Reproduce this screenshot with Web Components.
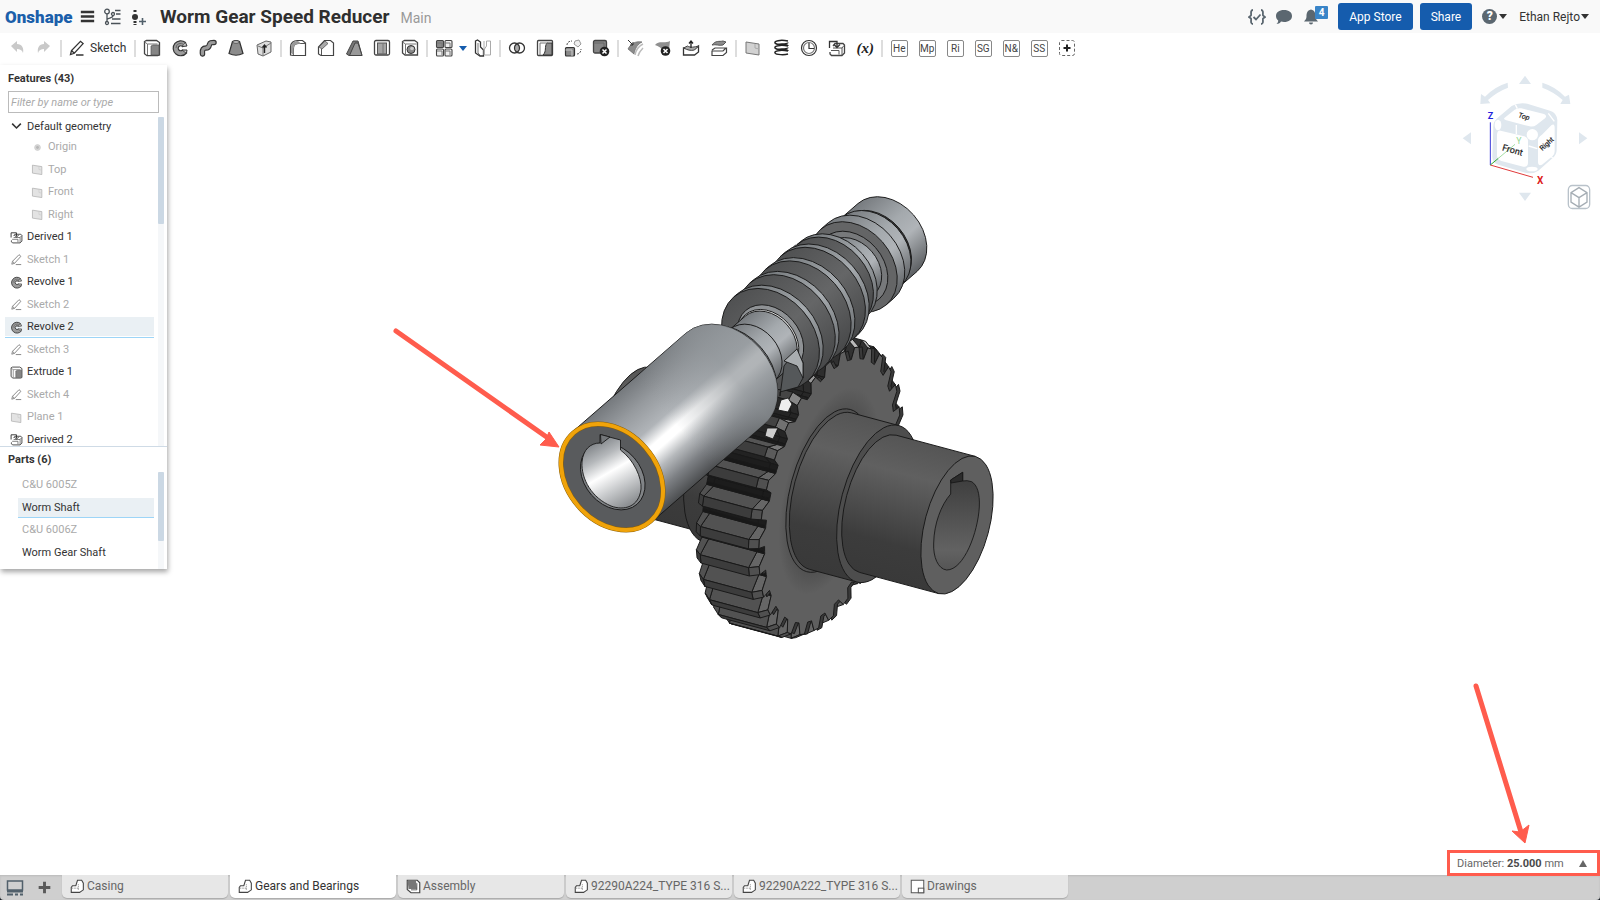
<!DOCTYPE html>
<html lang="en">
<head>
<meta charset="utf-8">
<title>Worm Gear Speed Reducer | Main</title>
<style>
html, body { margin: 0; height: 100%; }
body { font: 12px/16px Roboto, "Liberation Sans", sans-serif; color: #333; background: #1c2228; }
</style>
</head>
<body>
<cad-app></cad-app>
<script>
const define = (name, html, setup) => {
  const t = document.createElement('template');
  t.innerHTML = html;
  customElements.define(name, class extends HTMLElement {
    constructor() {
      super();
      this.attachShadow({ mode: 'open' }).append(t.content.cloneNode(true));
    }
    connectedCallback() { if (setup) setup(this, this.shadowRoot); }
  });
};

/* Icons share an 18 by 18 grid. */
const plane = '<path d="M2 3l13 2v11L2 14z" fill="#d2d2d2" stroke="#777"/><path d="M11 5v4l4 1" fill="none" stroke="#aaa"/>';
const icons = {
  menu: '<path d="M1 3.500h16M1 9h16M1 14.500h16" stroke="#333" stroke-width="3"/>',
  versions: '<g fill="none" stroke="#4a5258" stroke-width="1.300"><circle cx="4" cy="3.500" r="2.300"/><circle cx="10" cy="6" r="1.500"/><circle cx="4" cy="15" r="1.500"/><path d="M4 6v7.500M10 7.500c0 3-5 2-6 4M12 2.500h5.500M13 6h4.500M9 11h8.500M8 15.500h9.500"/></g>',
  insert: '<path d="M6 2v3M6 13v4" stroke="#333" stroke-width="3" stroke-dasharray="2 1"/><circle cx="6" cy="9" r="3" fill="#333"/><path d="M10 13.500h7M13.500 10v7" stroke="#51606b" stroke-width="1.600"/>',
  undo: '<path d="M3 7l6-5v3c5 0 7 4 6 9-1-3-3-4-6-4v3z" fill="#c9c9c9"/>',
  redo: '<path d="M15 7L9 2v3c-5 0-7 4-6 9 1-3 3-4 6-4v3z" fill="#c9c9c9"/>',
  pencil: '<path d="M2.500 15.500l1-4L12.500 2.300l2.600 2.300-8.800 9.700zM3.500 11.500l2.800 2.800M8 16h7.500" fill="none" stroke="#333" stroke-width="1.300"/>',
  extrude: '<path d="M1.500 2.500l2-1h10l3 2v12.500l-2 .7H4l-2.500-2z" fill="#fff" stroke="#444" stroke-width="1.300"/><path d="M1.500 3l3 2v11M4.500 5h10" fill="none" stroke="#777"/><path d="M8 7l2-1h6v10H8z" fill="#858585" stroke="#555" stroke-width=".7"/>',
  revolve: '<path d="M14.500 3.500A7.500 7.500 0 1 0 15.500 14l-4-3A2.500 2.500 0 1 1 11.500 7.500z" fill="#9c9c9c" stroke="#333" stroke-width="1.200"/><path d="M5 9a4.500 4.500 0 0 1 8-3" fill="none" stroke="#666"/><path d="M14.500 3.500l1.500 3.500-4.500.5M11.500 11l4.500 0-.5 3" fill="#ccc" stroke="#333"/>',
  sweep: '<path d="M3.500 15c-.5-5 1-6 3.500-6s3-1.500 3.500-3.500S12 3.500 15 3.500" fill="none" stroke="#333" stroke-width="5.500" stroke-linecap="round"/><path d="M3.500 15c-.5-5 1-6 3.500-6s3-1.500 3.500-3.500S12 3.500 15 3.500" fill="none" stroke="#9a9a9a" stroke-width="3.200" stroke-linecap="round"/>',
  loft: '<path d="M5.500 2.500L2 14.500q7 3.500 14 0L12.500 2.500q-3.500-2-7 0z" fill="#8c8c8c" stroke="#333" stroke-width="1.200"/><ellipse cx="9" cy="3" rx="3.200" ry="1.300" fill="#ccc" stroke="#444" stroke-width=".8"/>',
  thicken: '<path d="M2 6l9-4 5 1v10l-8 4-5-2z" fill="#ddd" stroke="#666"/><path d="M3 7l5 2 8-5M8 9v8" fill="none" stroke="#777"/><path d="M9.500 14V6M7.500 8.500l2-2.500 2 2.500" fill="none" stroke="#222" stroke-width="1.400"/>',
  fillet: '<path d="M1.500 16V8c0-4 3-6.500 7-6.500h5l3 2.500v12.500H4z" fill="#fff" stroke="#444" stroke-width="1.200"/><path d="M4.500 16V10c0-4 2.500-5.500 6-5.500h5.500" fill="none" stroke="#555"/><path d="M2 14V8c0-4 3-6 7-6l3 2.500C7 4.500 4.500 6 4.500 10v6z" fill="#999"/>',
  chamfer: '<path d="M1.500 15V8l6-6.500h6l3 2.500v12.500H4z" fill="#fff" stroke="#444" stroke-width="1.200"/><path d="M2 8l6-6 3 2.500-6 5.500z" fill="#aaa" stroke="#555" stroke-width=".8"/><path d="M4.500 16v-6" stroke="#555"/>',
  draft: '<path d="M1.500 15L8 2h5l4 14.500H4z" fill="#777" stroke="#444"/><path d="M4.500 16.500L10 4h3l4 12.500z" fill="#999" stroke="#444"/>',
  shell: '<rect x="1.500" y="1.500" width="15" height="14.500" rx="1.500" fill="#fff" stroke="#444" stroke-width="1.300"/><rect x="4.500" y="4" width="9" height="11" fill="#a5a5a5" stroke="#555"/><path d="M10 4v11" stroke="#777"/>',
  hole: '<path d="M1.500 2.500l2-1h10l3 2v12.500H4l-2.500-2z" fill="#fff" stroke="#444" stroke-width="1.300"/><path d="M1.500 3l3 2v11M4.500 5h11" fill="none" stroke="#777"/><circle cx="10" cy="10.500" r="4" fill="#8a8a8a" stroke="#333"/><circle cx="11" cy="9.500" r="1.800" fill="#ccc"/>',
  pattern: '<g fill="#eee" stroke="#444" stroke-width="1.100"><rect x="1.500" y="1.500" width="7" height="7" rx="1" fill="#8a8a8a"/><rect x="10" y="1.500" width="7" height="7" rx="1"/><rect x="1.500" y="10" width="7" height="7" rx="1"/><rect x="10" y="10" width="7" height="7" rx="1"/></g><path d="M2 4h5v4M10 4h5v4M2 12h5v4M10 12h5v4" fill="none" stroke="#777"/>',
  mirror: '<path d="M1.500 2l2-1 3 2v5l3 3v6H6l-4.500-3z" fill="#fff" stroke="#333" stroke-width="1.300"/><path d="M4 4v10l2 2" fill="none" stroke="#777"/><path d="M10 2v14M16.500 2h-4v5l-2 3v6h6z" fill="none" stroke="#aaa"/>',
  boolean: '<path d="M9 5a5 5 0 0 1 0 8 5 5 0 0 1 0-8" fill="#aaa"/><g fill="none" stroke="#333" stroke-width="1.300"><circle cx="6.500" cy="9" r="5"/><circle cx="11.500" cy="9" r="5"/></g>',
  split: '<rect x="1.500" y="1.500" width="15" height="15" rx="1" fill="#fff" stroke="#444" stroke-width="1.300"/><path d="M11 4h5v12H7c4-4 1-8 4-12z" fill="#8c8c8c" stroke="#333"/><path d="M4 4v12M4 4h8" stroke="#777" fill="none"/>',
  transform: '<rect x="1.500" y="8.500" width="9" height="8.500" rx="1" fill="#8a8a8a" stroke="#333" stroke-width="1.200"/><path d="M1.500 11h6.500v6" stroke="#ccc" fill="none"/><path d="M11 2l4-1 2 4-3 3-4-3z" fill="#eee" stroke="#999"/><path d="M3 6c0-3 3-4 5-4M13 15c3 0 4-3 4-5" fill="none" stroke="#555" stroke-dasharray="2 1"/>',
  remove: '<rect x="1.500" y="1.500" width="13" height="12.500" rx="1.500" fill="#858585" stroke="#444" stroke-width="1.300"/><path d="M2 4h10v9" fill="none" stroke="#666"/><circle cx="12.500" cy="12.500" r="4.800" fill="#222"/><path d="M10.500 10.500l4 4M14.500 10.500l-4 4" stroke="#fff" stroke-width="1.500"/>',
  modify: '<path d="M2 10c3-6 8-8 14-7-4 2-7 6-8 12z" fill="#8b8b8b" stroke="#666" stroke-width=".7"/><path d="M9 16c1-6 4-9 8-11M12 17c1-4 3-6 5-8" fill="none" stroke="#bbb" stroke-width="1.500"/><path d="M2 1l5 5M7 3v3H4" fill="none" stroke="#333"/>',
  deleteface: '<path d="M1 6c4-5 9-1 15-4l-1 9-6 3c0-5-5-7-8-8z" fill="#909090"/><circle cx="11.500" cy="12" r="4.800" fill="#222"/><path d="M9.500 10l4 4M13.500 10l-4 4" stroke="#fff" stroke-width="1.500"/>',
  moveface: '<path d="M1.500 9v7h11l4-3V7l-4 3z" fill="#fff" stroke="#333" stroke-width="1.300"/><path d="M1.500 9l4-2c3 2 7 1 11 0l-4 4c-4 1-7 0-11-2z" fill="#aaa" stroke="#444"/><path d="M9 9V2M7 4.500L9 2l2 2.500" fill="none" stroke="#222" stroke-width="1.300"/>',
  replaceface: '<path d="M2 6c4-5 7-3 11-4l3 1-3 3c-4 1-7-1-11 0z" fill="#8c8c8c" stroke="#555"/><path d="M2 11l3-2h11l-3 3H2v4.500h11l3.500-3V9" fill="#fff" stroke="#444" stroke-width="1.200"/>',
  plane,
  helix: '<g fill="none" stroke="#222" stroke-width="1.500"><path d="M16 2C8 .5 2 2 3 4s13 1 13-.5M3 4c2 3 13 0 13 3M16 7C8 5.500 2 7 3 9s13 1 13-.5M3 9c2 3 13 0 13 3M16 12c-8-1.500-14 0-13 2s10 2 13 1"/></g>',
  curve: '<g fill="none" stroke="#333" stroke-width="1.200"><circle cx="9" cy="9" r="7.500"/><circle cx="9" cy="9" r="5.500" stroke="#777"/><path d="M9 4v5.500h5"/></g>',
  derived: '<path d="M5 7l2-2.500h8l1.500 1.500v8l-2.500 2.500H3.500L2 15v-2" fill="#fff" stroke="#444" stroke-width="1.300"/><path d="M5 9h9l2-2.500M14 9v7M3 11.500h8v4" fill="none" stroke="#555"/><path d="M1.500 9V2.500H9v5M6 5.500L9 8.500l3-3" fill="none" stroke="#333" stroke-width="1.300"/>',
  add: '<rect x="1.500" y="1.500" width="15" height="15" rx="2" fill="none" stroke="#666" stroke-dasharray="3 2"/><path d="M5.500 9h7M9 5.500v7" stroke="#222" stroke-width="2"/>',
  braces: '<g fill="none" stroke="#5b6770" stroke-width="1.800"><path d="M5 2C2 2 3.500 6 3 7.500L1 9l2 1.500C3.500 12 2 16 5 16M13 2c3 0 1.500 4 2 5.500L17 9l-2 1.500c-.5 1.500 1 5.500-2 5.500M5.500 9l2.500 2.500 4.500-5"/></g>',
  chat: '<path d="M9 2c5 0 8 2.500 8 6s-3 6-8 6c-1 0-2 0-3-.4C5 15.500 3 16 1.500 16c1-1 1.800-2 1.700-3.500C1.700 11.300 1 9.800 1 8c0-3.500 3-6 8-6z" fill="#5b6770"/>',
  bell: '<path d="M9 1.500c-4 1-4.500 4-4.500 7 0 2-1 3.500-2.500 5h14c-1.500-1.500-2.500-3-2.500-5 0-3-.5-6-4.500-7zM7 14.500a2 2 0 0 0 4 0z" fill="#5b6770"/>',
  part: '<path d="M1.500 16h10l4.500-3V5l-2-3.500H9L7 8H3l-1.500 2z" fill="#fff" stroke="#444" stroke-width="1.300"/><path d="M2 11h8V6M10 11v2" fill="none" stroke="#888" stroke-dasharray="2 1"/>',
  assembly: '<path d="M1.500 1.500h12l3 3v12H6l-4.500-4z" fill="#fff" stroke="#444" stroke-width="1.400"/><path d="M2 2h10l1 10H3z" fill="#777"/><path d="M6 13h7V5" stroke="#444" fill="none"/>',
  drawing: '<rect x="1.500" y="1.500" width="15" height="15" fill="#fff" stroke="#555" stroke-width="1.200"/><rect x="10" y="11" width="6.500" height="5.500" fill="#fff" stroke="#555" stroke-width="1.200"/>',
  tabs: '<path d="M1.500 2h15v9h-15z" fill="none" stroke="#51606b" stroke-width="1.500"/><path d="M1 11h16v2.500H1zM1 14.500h6v2H1zM9 14.500h3v2H9zM14 14.500h3v2h-3z" fill="#51606b"/>',
  plus: '<path d="M2 9h14M9 2v14" stroke="#5a5a5a" stroke-width="3.500"/>',
  origin: '<circle cx="9" cy="9" r="4" fill="#bbb" stroke="#aaa"/><circle cx="9" cy="9" r="2" fill="#888"/>',
  chevron: '<path d="M3 5l6 6 6-6" fill="none" stroke="#333" stroke-width="2.200"/>',
  isocube: '<rect x="1" y="1" width="16" height="16" rx="3" fill="#fff" stroke="#b9c2ca"/><path d="M9 2.500l6 3.500v6.500L9 16l-6-3.500V6zM3 6l6 3.500L15 6M9 9.500V16" fill="none" stroke="#a5adb4"/>'
};

define('cad-icon', '<style>:host{display:block;width:18px;height:18px;flex:none}:host([small]){width:13px;height:13px}:host([mid]){width:15px;height:15px}:host([big]){width:24px;height:26px}svg{display:block;width:100%;height:100%}</style><svg viewBox="0 0 18 18" preserveAspectRatio="none" aria-hidden="true"></svg>',
  (el, root) => { root.querySelector('svg').innerHTML = icons[el.getAttribute('name')]; });

define('cad-caret', '<style>:host{display:block;flex:none;border:4px solid transparent;border-top:5px solid currentColor;border-bottom:0}:host([up]){border-top:0;border-bottom:7px solid currentColor}</style>');

/* Header */
define('cad-header', `<style>
:host{display:flex;align-items:center;height:33px;background:#f9f9f9;padding:0 11px 0 5px;box-sizing:border-box}
button{font:inherit;border:0;background:none;padding:0;color:inherit;display:flex;align-items:center}
a{font-weight:900;font-size:17px;line-height:24px;color:#1b5faa;text-decoration:none;width:67px}
.icons{display:flex;gap:8px;padding:0 13px 0 8px}
h1{font-size:19px;line-height:24px;font-weight:700;margin:0;color:#2f2f2f}
.branch{font-size:14px;color:#999;padding:3px 0 0 11px}
.end{margin-left:auto;display:flex;align-items:center}
.acts{display:flex;gap:9px;padding-right:18px}
.bell{position:relative}
.badge{position:absolute;left:13px;top:-2px;width:13px;height:13px;background:#3a85c8;color:#fff;font-size:10px;line-height:13px;font-weight:700;text-align:center;border-radius:1px}
.fill{background:#155cad;color:#fff;border-radius:3px;height:27px;padding:0 11px;margin-right:7px}
.help{width:15px;height:15px;border-radius:50%;background:#5b6770;color:#fff;font-weight:900;font-size:12px;line-height:15px;text-align:center;margin-right:2px}
.q{padding:0 12px 0 3px}.user{gap:1px}
</style>
<a href="#">Onshape</a>
<div class="icons"><button aria-label="Menu"><cad-icon name="menu" mid></cad-icon></button><button aria-label="Versions"><cad-icon name="versions"></cad-icon></button><button aria-label="Insert"><cad-icon name="insert"></cad-icon></button></div>
<h1>Worm Gear Speed Reducer</h1><span class="branch">Main</span>
<div class="end">
<div class="acts"><button aria-label="Custom features"><cad-icon name="braces"></cad-icon></button><button aria-label="Comments"><cad-icon name="chat"></cad-icon></button><button class="bell" aria-label="Notifications"><cad-icon name="bell"></cad-icon><span class="badge">4</span></button></div>
<button class="fill">App Store</button><button class="fill">Share</button>
<button class="q" aria-label="Help"><span class="help">?</span><cad-caret></cad-caret></button>
<button class="user">Ethan Rejto<cad-caret></cad-caret></button>
</div>`);

/* Toolbar */
define('tool-group', '<style>:host{display:flex;align-items:center;gap:8px}:host::before{content:"";width:2px;height:17px;background:#ddd;margin:0 -2px 0 6px}</style><slot></slot>');
define('tool-button', '<style>:host{display:block}button{display:flex;align-items:center;justify-content:center;width:20px;height:20px;border:0;background:none;padding:0;font:inherit}span{display:none}:host([code]) span{display:block;box-sizing:border-box;width:17px;height:17px;border:1px solid #888;border-radius:2px;font-size:10px;line-height:15px;color:#444}:host([fx]) span{display:block;font:italic 700 15px/16px "Liberation Serif",serif;color:#222}</style><button><cad-icon></cad-icon><span></span></button>',
  (el, root) => {
    const n = el.getAttribute('name'), code = el.getAttribute('code') || el.getAttribute('fx');
    if (code) { root.querySelector('span').textContent = code; root.querySelector('cad-icon').remove(); }
    else { const i = document.createElement('cad-icon'); i.setAttribute('name', n); root.querySelector('cad-icon').replaceWith(i); }
    root.querySelector('button').setAttribute('aria-label', code || n);
  });
const tools = s => s.split(' ').map(n => `<tool-button name="${n}"></tool-button>`).join('');
define('cad-toolbar', `<style>
:host{display:flex;align-items:center;height:32px;background:#fff;padding:0 0 2px 7px;box-sizing:border-box}
.hist{display:flex;gap:7px}
.sketch{display:flex;align-items:center;gap:4px;font:inherit;color:#333;border:0;background:none;padding:0;margin-right:2px}
.pat{display:flex;align-items:center;gap:5px;color:#155cad;margin-right:-2px}
</style>
<div class="hist">${tools('undo redo')}</div>
<tool-group><button class="sketch"><cad-icon name="pencil"></cad-icon>Sketch</button></tool-group>
<tool-group>${tools('extrude revolve sweep loft thicken')}</tool-group>
<tool-group>${tools('fillet chamfer draft shell hole')}</tool-group>
<tool-group><div class="pat">${tools('pattern')}<cad-caret></cad-caret></div>${tools('mirror')}</tool-group>
<tool-group>${tools('boolean split transform remove')}</tool-group>
<tool-group>${tools('modify deleteface moveface replaceface')}</tool-group>
<tool-group>${tools('plane helix curve derived')}<tool-button fx="(x)"></tool-button></tool-group>
<tool-group>${['He', 'Mp', 'Ri', 'SG', 'N&amp;', 'SS'].map(c => `<tool-button code="${c}"></tool-button>`).join('')}${tools('add')}</tool-group>`);

/* Feature panel */
define('tree-row', `<style>
:host{display:flex;align-items:center;flex:1 1 0;min-height:0;line-height:12px;padding:0 0 0 5px;margin:0 4px 0 5px;color:#333}
:host([dim]){color:#aaa}:host([dim]) cad-icon{opacity:.6}
:host([sub]){padding-left:26px}
:host([root]){flex:0 0 19px}
:host([part]){margin-left:18px;padding-left:4px}
:host([on]){background:linear-gradient(#9dd5f7,#9dd5f7) left bottom 1px/100% 1px no-repeat,linear-gradient(#eaf0f4,#eaf0f4) left top 1px/100% 19px no-repeat}
cad-icon{margin-right:4px}
</style><cad-icon small></cad-icon><slot></slot>`, (el, root) => {
  const n = el.getAttribute('name'), old = root.querySelector('cad-icon');
  if (!n) { old.remove(); return; }
  const i = document.createElement('cad-icon'); i.setAttribute('name', n); i.setAttribute('small', ''); old.replaceWith(i);
});
define('feature-panel', `<style>
:host{display:block;width:167px;background:#fff;box-shadow:1px 3px 5px rgba(0,0,0,.35);font-size:11px}
h2{font-size:11px;line-height:16px;font-weight:700;margin:0;padding:6px 8px 4px}
input{display:block;box-sizing:border-box;width:151px;height:22px;margin:0 8px;border:1px solid #bbb;padding:0 2px;font:italic 11px Roboto,sans-serif;background:#fff}
input::placeholder{color:#aaa;opacity:1}
.scroll{display:flex;overflow:hidden}
.rows{flex:1;display:flex;flex-direction:column}
.bar{width:6px;margin-right:3px;background:#f5f7f9}
.bar i{display:block;background:#cbd8e4;border-radius:1px}
.f{height:333px;padding-top:4px;box-sizing:border-box}
.f .rows{height:334px}.f i{height:107px}
.p{height:97px}.p .rows{height:90px;padding-top:2px}.p i{height:69px}
.parts{border-top:1px solid #cfdbe6}
.parts h2{padding:5px 8px 4px}
</style>
<h2>Features (43)</h2>
<input type="text" aria-label="Filter features" placeholder="Filter by name or type">
<div class="scroll f"><div class="rows">
<tree-row root name="chevron">Default geometry</tree-row>
<tree-row dim sub name="origin">Origin</tree-row><tree-row dim sub name="plane">Top</tree-row><tree-row dim sub name="plane">Front</tree-row><tree-row dim sub name="plane">Right</tree-row>
<tree-row name="derived">Derived 1</tree-row><tree-row dim name="pencil">Sketch 1</tree-row><tree-row name="revolve">Revolve 1</tree-row><tree-row dim name="pencil">Sketch 2</tree-row><tree-row on name="revolve">Revolve 2</tree-row><tree-row dim name="pencil">Sketch 3</tree-row><tree-row name="extrude">Extrude 1</tree-row><tree-row dim name="pencil">Sketch 4</tree-row><tree-row dim name="plane">Plane 1</tree-row><tree-row name="derived">Derived 2</tree-row>
</div><div class="bar"><i></i></div></div>
<div class="parts"><h2>Parts (6)</h2>
<div class="scroll p"><div class="rows"><tree-row part dim>C&amp;U 6005Z</tree-row><tree-row part on>Worm Shaft</tree-row><tree-row part dim>C&amp;U 6006Z</tree-row><tree-row part>Worm Gear Shaft</tree-row></div><div class="bar"><i></i></div></div></div>`);

/* 3D model: two shafts, each drawn in a frame whose x axis is its own axis. */
function drawModel() {
  const ink = 'stroke="#191919" stroke-width=".9" stroke-linejoin="round"';
  const n = v => v.toFixed(1);
  const ell = (x, r, k, fill, y = 0) => `<ellipse cx="${x}" cy="${y}" rx="${n(r * k)}" ry="${r}" fill="${fill}" ${ink}/>`;

  /* Gear shaft: the visible end is at x = 0 and the body runs to negative x. */
  const K = .453, KG = .415;
  const hub = (a, b, r, fill) => `<path d="M${a} ${-r}L${b} ${-r}A${n(r * K)} ${r} 0 0 0 ${b} ${r}L${a} ${r}Z" fill="${fill}" ${ink}/>`;
  const teeth = 30, front = -132;
  const xs = [front, front - 8, front - 58, front - 65], tip = [148, 154, 154, 148], rootR = 136;
  const prof = [[0, 0], [.2, 0], [.3, 1], [.62, 1], [.9, 0]];
  const ring = j => {
    const out = [];
    for (let t = 0; t < teeth; t++) for (const [f, up] of prof) {
      const a = (t + f + .2) * 2 * Math.PI / teeth, r = up ? tip[j] : rootR;
      out.push([xs[j] + r * KG * Math.cos(a), r * Math.sin(a), a]);
    }
    return out;
  };
  const rings = xs.map((_, j) => ring(j));
  const quads = [];
  const count = rings[0].length;
  const shade = [28, 32, 60, 82, 24];
  for (let i = 0; i < count; i++) for (let j = 0; j < 3; j++) {
    const m = (i + 1) % count, A = rings[j][i], B = rings[j][m], C = rings[j + 1][m], D = rings[j + 1][i];
    const area = (B[0] - A[0]) * (D[1] - A[1]) - (B[1] - A[1]) * (D[0] - A[0]);
    if (area > 0) continue;
    const kind = i % 5, mid = A[2];
    const upper = Math.max(0, -Math.sin(mid));
    const g = Math.round(shade[kind] + (j === 0 && kind > 1 && kind < 4 ? 20 + 90 * upper : 0) + upper * 18);
    quads.push([Math.cos(mid) - (kind === 2 ? .1 : 0), `<path d="M${[A, B, C, D].map(p => n(p[0]) + ' ' + n(p[1])).join('L')}Z" fill="rgb(${g},${g},${g})" ${ink}/>`]);
  }
  quads.sort((a, b) => b[0] - a[0]);
  const outline = r => 'M' + r.map(p => n(p[0]) + ' ' + n(p[1])).join('L') + 'Z';

  const gear = `<g transform="translate(957 525) rotate(15)">
    ${hub(-200, -336, 73, 'url(#dark)')}${hub(-180, -240, 82, 'url(#dark)')}
    <path d="${outline(rings[2])}" fill="#262626" ${ink}/>${quads.map(q => q[1]).join('')}
    <path d="${outline(rings[0])}" fill="#3a3a3a" ${ink} transform="translate(3 -1)"/>
    <path d="${outline(rings[0])}" fill="url(#gearface)" ${ink}/>
    ${ell(-133, 84, K, '#505050')}${hub(-82, -131, 81, 'url(#dark)')}
    ${ell(-82, 81, K, '#4d4d4d')}${hub(0, -82, 71, 'url(#dark)')}${ell(0, 71, K, '#5f5f5f')}
  </g>
  <path d="M950.700 480L962.700 472.300L962.700 481Q967 480 971.700 481.700C977 485 980 493 979.300 507C978 532 964 570 946.700 570C938 569 933 557 933.700 543C934 524 941 505 950.700 494Z" fill="url(#bore)" ${ink}/>
  <path d="M950.700 480L962.700 472.300V481L951 483Z" fill="#2c2c2c" ${ink}/>`;

  /* Worm shaft: the visible end is at x = 0 and the body runs to positive x. */
  const W = .766;
  const rod = (a, b, r, fill, line = ink, y = 0) => `<path d="M${a} ${y - r}L${b} ${y - r}A${n(r * W)} ${r} 0 0 1 ${b} ${y + r}L${a} ${y + r}Z" fill="${fill}" ${line}/>`;
  let worm = rod(346, 365, 45, 'url(#steel)') + rod(343, 347, 43, '#333') + rod(330, 344, 45, 'url(#steel)') +
    rod(320, 330, 50, 'url(#steel)') + ell(320, 50, W, '#646566') + ell(318, 41, W, '#77797b') + rod(290, 318, 34, 'url(#steel)');
  [[292, 50, -4], [273, 55, -1], [252, 56, 0], [231, 56, 0], [210, 56, 0]].forEach(([s, r, y], i) => {
    if (i) worm += `<path d="M${s + 2} ${y - r + 1}H${s + 18}V${y}H${s + 2}Z" fill="#505152"/>`;
    worm += rod(s, s + 5, r, 'url(#rim)', ink, y) + ell(s, r, W, 'url(#flank)', y);
  });
  worm += ell(210, 38, W, '#8f9295') + ell(207, 35, W, '#d9dadb') + rod(150, 206, 34, 'url(#steel)') +
    `<path d="M186 -34A26 34 0 0 1 186 34" fill="none" ${ink}/>` +
    rod(150, 156, 54, '#777b7f') + rod(0, 150, 60, 'url(#barrel)') +
    `<path d="M0 -60L150 -60A46 60 0 0 1 150 60L0 60Z" fill="url(#fade)"/>` +
    `<ellipse rx="44.500" ry="58.500" fill="#595b5d" stroke="#8a5f08" stroke-width="5"/><ellipse rx="44.500" ry="58.500" fill="none" stroke="#f0a30a" stroke-width="4"/>` +
    ell(1, 37, W, '#818487');

  return `<defs>
    <linearGradient id="dark" x1="0" y1="0" x2="0" y2="1"><stop offset="0" stop-color="#555"/><stop offset=".25" stop-color="#606060"/><stop offset=".75" stop-color="#3c3c3c"/><stop offset="1" stop-color="#393939"/></linearGradient>
    <linearGradient id="bore" x1="0" y1="0" x2="0" y2="1"><stop offset="0" stop-color="#3b3b3b"/><stop offset=".8" stop-color="#626262"/><stop offset="1" stop-color="#555"/></linearGradient>
    <radialGradient id="gearface" cx=".5" cy=".5" r=".5"><stop offset=".55" stop-color="#505050"/><stop offset=".72" stop-color="#5f5f5f"/></radialGradient>
    <linearGradient id="steel" x1="0" y1="0" x2="0" y2="1"><stop offset="0" stop-color="#777b7f"/><stop offset=".4" stop-color="#a4a9ad"/><stop offset=".62" stop-color="#b0b4b8"/><stop offset="1" stop-color="#5d6063"/></linearGradient>
    <linearGradient id="rim" x1="0" y1="0" x2="0" y2="1"><stop offset="0" stop-color="#74787b"/><stop offset=".5" stop-color="#a6abaf"/><stop offset="1" stop-color="#66696c"/></linearGradient>
    <linearGradient id="flank" x1="0" y1="0" x2="0" y2="1"><stop offset="0" stop-color="#505152"/><stop offset=".5" stop-color="#656667"/><stop offset="1" stop-color="#48494a"/></linearGradient>
    <linearGradient id="barrel" x1="0" y1="0" x2="0" y2="1"><stop offset="0" stop-color="#75797d"/><stop offset=".2" stop-color="#969a9e"/><stop offset=".4" stop-color="#b0b4b8"/><stop offset=".52" stop-color="#fff"/><stop offset=".58" stop-color="#fff"/><stop offset=".7" stop-color="#b6b9bc"/><stop offset=".84" stop-color="#7d8084"/><stop offset="1" stop-color="#4b4d4f"/></linearGradient>
    <linearGradient id="fade" x1="0" x2="1" y1="0" y2="0"><stop offset=".42" stop-color="#8f9498" stop-opacity="0"/><stop offset=".8" stop-color="#8f9498" stop-opacity=".7"/></linearGradient>
    <linearGradient id="inner" gradientUnits="userSpaceOnUse" x1="592" y1="442" x2="628" y2="505"><stop offset="0" stop-color="#7c8084"/><stop offset=".25" stop-color="#b5b8bb"/><stop offset=".48" stop-color="#fff"/><stop offset=".72" stop-color="#c9cbcd"/><stop offset="1" stop-color="#8d9093"/></linearGradient>
  </defs>
  ${gear}
  <path d="M778 410L781 400L788 398L792 404L788 412Z" fill="#eee" ${ink}/><path d="M767 428L778 428L773 439L765 436Z" fill="#ccc" ${ink}/>
  <g transform="translate(612 477) rotate(-41)">${worm}</g>
  <path d="M780 396L784 366L796 350L803 362L803 378L798 387L780 392Z" fill="#55585a" ${ink}/>
  <path d="M784 361L797 349L803 363L803 378L797 366Z" fill="#a9adb0" ${ink}/>
  <path d="M600 441L600 434.500L620.500 440L620.500 450C634 460 642 478 641 489C639 507 624 511 611 506C592 498 581 479 582 462C583 450 590 443 600 443Z" fill="url(#inner)" ${ink}/>
  <path d="M600.500 434.500L610 437L601 444Z" fill="#74777a" ${ink}/>
  <path d="M396 331L548 438" stroke="#ff5c4d" stroke-width="5" stroke-linecap="round"/><path d="M559 447L540 445L546 439L549 432Z" fill="#ff5c4d" stroke="#ff5c4d"/>`;
}
define('model-canvas', '<style>:host{display:block;min-height:0}svg{display:block;width:100%;height:100%}</style><svg viewBox="0 65 1600 810" role="img" aria-label="Worm gear model"></svg>',
  (el, root) => { root.querySelector('svg').innerHTML = drawModel(); });

/* View cube */
define('view-cube', `<style>:host{display:flex;flex-direction:column;align-items:flex-end;width:144px}
svg{display:block}button{border:0;background:none;padding:0;margin:-26px 9px 0 0;position:relative}</style>
<svg width="144" height="140" viewBox="648 210 432 420" role="img" aria-label="View cube">
<g fill="#dfe7ee"><path d="M837 252l18-25 18 25zM837 578l18 25 18-25zM668 415l25-18v36zM1042 415l-25-18v36z"/>
<path d="M803 248q-40 12-68 42l-12-8-2 30 30-2-7-10q26-24 60-37zM907 248q40 12 68 42l12-6 4 28-30 0 7-12q-26-24-61-37z"/>
<path d="M760 385Q758 365 775 352L815 318Q835 306 862 311L930 332Q950 338 952 360L950 450Q950 464 938 474L895 512Q878 524 856 518L775 494Q756 488 757 468Z"/></g>
<path d="M826 314l6 12M866 438l26 8M829 375v28M925 340l18 24M938 474l-10-10" stroke="#fff" stroke-width="4"/>
<g fill="#fff"><path d="M796 352l28-23q8-6 20-4l68 17q10 4 4 12l-27 21q-8 6-20 4l-70-18q-12-3-3-9z"/><path d="M782 392l70 17q12 3 12 14v66q-1 13-14 11l-66-17q-13-4-13-17v-62q1-14 11-12z"/><path d="M906 404l28-28q10-8 10 8v70q0 9-6 14l-32 26q-12 5-12-8v-66q0-8 12-16z"/><circle cx="877" cy="404" r="17"/><ellipse cx="774" cy="375" rx="10" ry="16"/><ellipse cx="876" cy="507" rx="17" ry="7"/></g>
<g fill="none" stroke-width="3"><path d="M751 367v128" stroke="#3a3ad8"/><path d="M751 495l128 37" stroke="#e03a3a"/><path d="M751 495l24-20" stroke="#2faa2f"/><path d="M775 475l50-42" stroke="#a5dfa5"/></g>
<g font-family="Roboto, sans-serif"><text x="743" y="358" font-size="27" font-weight="700" fill="#2222dd">Z</text><text x="891" y="551" font-size="30" font-weight="700" fill="#dd2222">X</text><text x="829" y="431" font-size="26" fill="#93d893">Y</text>
<g fill="#222" stroke="#222" stroke-width=".6"><text transform="translate(785 451) rotate(15)" font-size="27">Front</text><text transform="translate(834 352) rotate(14)" font-size="21" font-style="italic">Top</text><text transform="translate(907 453) rotate(-42)" font-size="21">Right</text></g></g>
</svg>
<button aria-label="View options"><cad-icon big name="isocube"></cad-icon></button>`);

/* Measurement read-out with its callout arrow */
define('measure-box', `<style>:host{display:flex;flex-direction:column;align-items:stretch;width:153px;font-size:11px;position:relative;z-index:1}
svg{display:block;margin:0 0 6px 20px}
.box{box-sizing:border-box;height:26px;border:3px solid #ff5c4d;background:#fff;display:flex;align-items:center;justify-content:space-between;padding:1px 10px 0 7px;color:#666;white-space:pre}
b{color:#4a4a4a}</style>
<svg width="64" height="162" viewBox="1467 682 64 162" aria-hidden="true"><path d="M1476 686L1521 832" stroke="#ff5c4d" stroke-width="5" stroke-linecap="round"/><path d="M1525 843L1512 831L1520 832L1529 825Z" fill="#ff5c4d" stroke="#ff5c4d"/></svg>
<div class="box"><span>Diameter: <b>25.000</b> mm</span><cad-caret up></cad-caret></div>`);

/* Tabs */
define('doc-tab', `<style>:host{display:block;flex:0 1 166px;min-width:0}
button{display:flex;align-items:center;gap:2px;width:100%;height:23px;padding:0 8px 1px;border:0;border-radius:0 0 5px 5px;background:#e7e7e7;box-shadow:0 1px 1px #aaa;font:inherit;color:#666;white-space:nowrap}
:host([on]) button{background:#fff;color:#333}</style><button><cad-icon mid></cad-icon><slot></slot></button>`, (el, root) => {
  const i = document.createElement('cad-icon'); i.setAttribute('name', el.getAttribute('name')); i.setAttribute('mid', ''); root.querySelector('cad-icon').replaceWith(i);
});
define('tab-bar', `<style>:host{display:flex;gap:2px;height:25px;background:#cfcfcf;border-radius:0 0 4px 4px;box-shadow:inset 0 1px 2px #bbb}
.tools{display:flex;align-items:center;gap:13px;width:60px;box-sizing:border-box;padding-left:6px;flex:none}
.tools button{border:0;background:none;padding:0}</style>
<div class="tools"><button aria-label="Tab manager"><cad-icon name="tabs"></cad-icon></button><button aria-label="Add tab"><cad-icon name="plus" mid></cad-icon></button></div>
<doc-tab name="part">Casing</doc-tab><doc-tab name="part" on>Gears and Bearings</doc-tab><doc-tab name="assembly">Assembly</doc-tab><doc-tab name="part">92290A224_TYPE 316 S...</doc-tab><doc-tab name="part">92290A222_TYPE 316 S...</doc-tab><doc-tab name="drawing">Drawings</doc-tab>`);

define('cad-app', `<style>
:host{display:grid;grid-template-rows:auto auto minmax(0,1fr) auto;height:100vh}
main{display:grid;grid-template:minmax(0,1fr)/minmax(0,1fr);background:#fff;min-height:0}
main>*{grid-area:1/1}
feature-panel{align-self:start;justify-self:start}
view-cube{align-self:start;justify-self:end;margin-top:5px}
measure-box{align-self:end;justify-self:end;margin-bottom:-1px}
</style>
<cad-header></cad-header><cad-toolbar></cad-toolbar>
<main><model-canvas></model-canvas><feature-panel></feature-panel><view-cube></view-cube><measure-box></measure-box></main>
<tab-bar></tab-bar>`);
</script>
</body>
</html>
